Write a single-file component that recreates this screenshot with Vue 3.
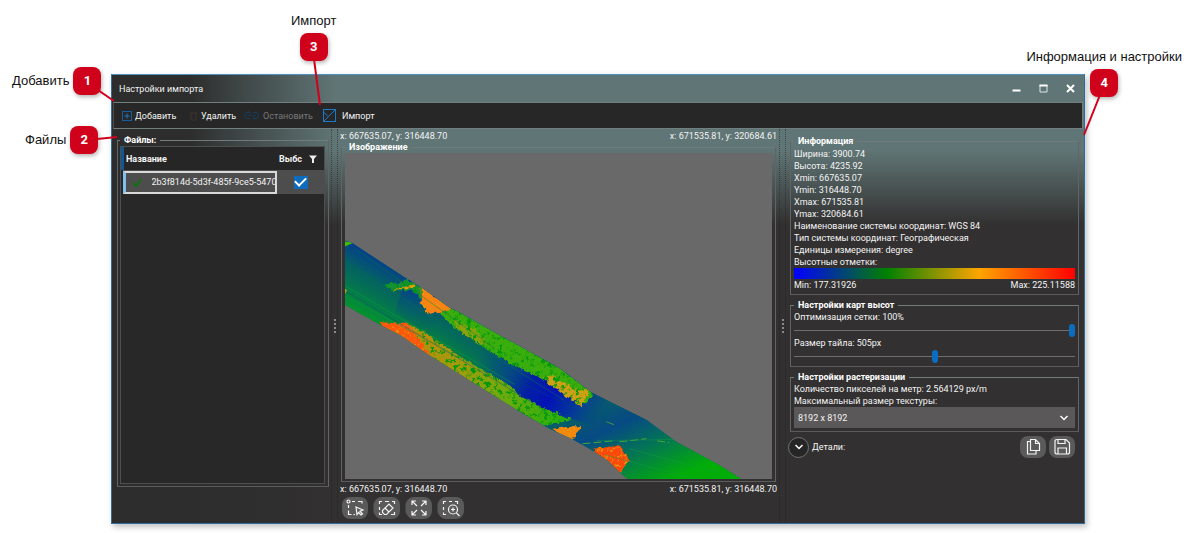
<script setup>
import { ref } from 'vue'

const info = [
  'Ширина: 3900.74',
  'Высота: 4235.92',
  'Xmin: 667635.07',
  'Ymin: 316448.70',
  'Xmax: 671535.81',
  'Ymax: 320684.61',
  'Наименование системы координат: WGS 84',
  'Тип системы координат: Географическая',
  'Единицы измерения: degree',
  'Высотные отметки:',
]
const mesh = ref(100)
const tile = ref(505)
const texture = ref('8192 x 8192')
const picked = ref(true)
</script>

<template>
  <main class="page">
    <section class="window" aria-label="Настройки импорта">
      <header class="titlebar">
        <h1>Настройки импорта</h1>
        <div class="controls">
          <button type="button" aria-label="Свернуть"><svg width="9" height="9" viewBox="0 0 9 9"><path d="M0.5 6.5h8" stroke="#fff" stroke-width="2" /></svg></button>
          <button type="button" aria-label="Развернуть"><svg width="9" height="9" viewBox="0 0 9 9"><path d="M1 1v7h7V1" fill="none" stroke="#dfe6e6" /><path d="M0.5 1.5h8" stroke="#fff" stroke-width="2" /></svg></button>
          <button type="button" aria-label="Закрыть"><svg width="9" height="9" viewBox="0 0 9 9"><path d="M1 1l7 7M8 1L1 8" stroke="#fff" stroke-width="2" /></svg></button>
        </div>
      </header>

      <nav class="toolbar">
        <button type="button" class="add">
          <svg width="10" height="10" viewBox="0 0 10 10" fill="none" stroke="#155d9c"><rect x="0.5" y="0.5" width="9" height="9" /><path d="M5 2.5v5M2.5 5h5" stroke="#2377bd" /></svg>
          Добавить
        </button>
        <button type="button" class="remove">
          <svg width="9" height="11" viewBox="0 0 9 11" fill="none" stroke="#40332d"><path d="M1 3h7M2 3v7h5V3" /></svg>
          Удалить
        </button>
        <button type="button" class="stop" disabled>
          <svg width="15" height="11" viewBox="0 0 15 11" fill="none" stroke="#173d5c"><path d="M6 2.5H3Q0.5 2.5 0.5 5.5T3 8.5H6M9 2.5H12Q14.5 2.5 14.5 5.5T12 8.5H10M3.5 5.5H6M4 0.5L11 10.5M9 5.500H11.5" /></svg>
          Остановить
        </button>
        <button type="button" class="import">
          <svg width="13" height="13" viewBox="0 0 13 13" fill="none" stroke="#1d79c4"><rect x="0.5" y="0.5" width="12" height="12" /><path d="M0.5 12.5L12.5 0.5M0.5 3L5 7.500" /></svg>
          Импорт
        </button>
      </nav>

      <div class="body">
        <div class="left">
          <fieldset class="group files">
            <legend>Файлы:</legend>
            <div class="grid">
              <table>
                <thead>
                  <tr>
                    <th scope="col">Название</th>
                    <th scope="col" class="pick">
                      <div>Выбс
                        <svg width="8" height="8" viewBox="0 0 8 8"><path d="M0 0.500h8L5 4v4H3V4z" fill="#eee" /></svg>
                      </div>
                    </th>
                  </tr>
                </thead>
                <tbody>
                  <tr>
                    <td class="name">
                      <div>
                        <svg width="10" height="9" viewBox="0 0 10 9"><path d="M1 5l3 3L9 1" fill="none" stroke="#0d720d" stroke-width="2" /></svg>
                        <span>2b3f814d-5d3f-485f-9ce5-5470</span>
                      </div>
                    </td>
                    <td class="pick"><input v-model="picked" type="checkbox" aria-label="Выбрать файл"></td>
                  </tr>
                </tbody>
              </table>
            </div>
          </fieldset>
        </div>

        <div class="splitter"><i></i></div>

        <div class="middle">
          <div class="coords top"><span>x: 667635.07, y: 316448.70</span><span>x: 671535.81, y: 320684.61</span></div>
          <fieldset class="group image">
            <legend>Изображение</legend>
            <svg class="map" viewBox="0 0 428 324" preserveAspectRatio="none" role="img" aria-label="Карта высот">
              <defs>
                <linearGradient id="across" gradientUnits="userSpaceOnUse" x1="40" y1="108" x2="8" y2="165">
                  <stop offset="0" stop-color="#043f8c" /><stop offset="0.35" stop-color="#04645f" /><stop offset="0.65" stop-color="#057b48" /><stop offset="1" stop-color="#03a41c" />
                </linearGradient>
                <linearGradient id="tail" gradientUnits="userSpaceOnUse" x1="265" y1="248" x2="305" y2="335">
                  <stop offset="0" stop-color="#06596e" /><stop offset="0.25" stop-color="#074a84" /><stop offset="0.55" stop-color="#04705a" /><stop offset="1" stop-color="#02ad08" />
                </linearGradient>
                <linearGradient id="river" gradientUnits="userSpaceOnUse" x1="60" y1="140" x2="262" y2="258">
                  <stop offset="0" stop-color="#047150" stop-opacity="0" /><stop offset="0.2" stop-color="#04803f" /><stop offset="0.4" stop-color="#057a48" /><stop offset="0.55" stop-color="#05507c" /><stop offset="0.66" stop-color="#0420a4" /><stop offset="0.76" stop-color="#0312b6" /><stop offset="0.88" stop-color="#053b98" /><stop offset="1" stop-color="#074a84" stop-opacity="0" />
                </linearGradient>
                <linearGradient id="edge" gradientUnits="userSpaceOnUse" x1="150" y1="172" x2="128" y2="210">
                  <stop offset="0" stop-color="#053a96" stop-opacity="0.8" /><stop offset="1" stop-color="#053a96" stop-opacity="0" />
                </linearGradient>
                <linearGradient id="bank" gradientUnits="userSpaceOnUse" x1="60" y1="170" x2="210" y2="265">
                  <stop offset="0" stop-color="#c08a10" /><stop offset="0.4" stop-color="#a39b08" /><stop offset="0.7" stop-color="#6eab08" /><stop offset="1" stop-color="#2fb009" />
                </linearGradient>
                <filter id="rough" x="-10%" y="-10%" width="120%" height="120%">
                  <feTurbulence type="fractalNoise" baseFrequency="0.25" numOctaves="2" seed="4" />
                  <feDisplacementMap in="SourceGraphic" scale="6" xChannelSelector="R" yChannelSelector="G" />
                </filter>
                <filter id="speckle" x="0" y="0" width="100%" height="100%" color-interpolation-filters="sRGB">
                  <feTurbulence type="fractalNoise" baseFrequency="0.22" numOctaves="3" seed="9" />
                  <feColorMatrix values="0 0 0 0 0.02  0 0 0 0 0.6  0 0 0 0 0.06  6 0 0 0 -3.2" />
                  <feComposite in2="SourceGraphic" operator="in" result="spots" />
                  <feMerge><feMergeNode in="SourceGraphic" /><feMergeNode in="spots" /></feMerge>
                </filter>
                <filter id="ember" x="0" y="0" width="100%" height="100%" color-interpolation-filters="sRGB">
                  <feTurbulence type="fractalNoise" baseFrequency="0.3" numOctaves="2" seed="2" />
                  <feColorMatrix values="0 0 0 0 0.88  0 0 0 0 0.62  0 0 0 0 0.03  5 0 0 0 -2.7" />
                  <feComposite in2="SourceGraphic" operator="in" result="spots" />
                  <feMerge><feMergeNode in="SourceGraphic" /><feMergeNode in="spots" /></feMerge>
                </filter>
                <clipPath id="strip"><path d="M0 87L8 90 62 125 77 134 105 154 112 157 142 174 215 214 247 238 302 265 332 287 375 310 397 324H283L275 317 264 306 250 297 238 290 225 283 205 274 175 257 143 237 83 200 57 182 32 169 0 151z" /></clipPath>
              </defs>
              <g clip-path="url(#strip)">
                <rect width="428" height="324" fill="#046a55" />
                <path d="M0 80L150 180 210 260 60 190 0 151z" fill="url(#across)" />
                <path d="M180 200L400 315V330H260L170 270z" fill="url(#tail)" />
                <path d="M50 120L120 160 220 210 275 245 265 275 160 245 60 180 30 150z" fill="url(#river)" />
                <path d="M62 120L180 190 170 236 50 158z" fill="url(#edge)" />
                <path d="M0 88l9 1-9 4z" fill="#3fbd05" />
                <path d="M0 135l2 2-2 3z" fill="#e0b000" />
                <g filter="url(#rough)">
                  <g filter="url(#speckle)">
                    <path d="M40 131L52 128 52 131 62 126 77 132 95 158 85 154 68 137 46 136z" fill="#159030" />
                    <path d="M94 158L112 154 142 170 215 210 251 236 240 250 206 229 184 218 168 211 141 194 110 174z" fill="#3aae0c" />
                    <path d="M108 165l22 10 16 16-12-2-20-12z" fill="#8aa30b" />
                    <path d="M198 222l12 0 20 13 16 1-9 16-15-10-20-14z" fill="#cf9f12" />
                    <path d="M61 168L82 180 118 204 162 229 178 243 200 254 226 264 217 268 198 271 175 262 143 242 79 202z" fill="url(#bank)" />
                  </g>
                  <g filter="url(#ember)">
                    <path d="M50 135l18-4 2 3-22 2z" fill="#e69a08" />
                    <path d="M76 133l31 22-23 5-8-10z" fill="#f98212" />
                    <path d="M32 168l31 2 12 16 12 18-31-18z" fill="#fc560c" />
                    <path d="M208 274l29-3-11 16z" fill="#f48809" />
                    <path d="M247 294l28-3 10 13-9 15z" fill="#fb4907" />
                  </g>
                </g>
                <path d="M197 273l40-5" stroke="#065f68" stroke-width="2" />
                <path d="M238 289l32-3M275 287l27-3M313 286l12 2M262 267l10 4" fill="none" stroke="#4aa536" stroke-dasharray="8 3" />
                <g fill="none" stroke-width="1" opacity="0.4">
                  <path d="M0 108L220 246M10 95L150 194" stroke="#067a44" />
                  <path d="M0 132L170 230M0 142L150 222" stroke="#04a93e" />
                  <path d="M0 137L200 255M160 220l75 36" stroke="#064a78" />
                  <path d="M260 300l90 24M285 294l90 24M252 286l120-2" stroke="#13a245" />
                </g>
              </g>
            </svg>
          </fieldset>
          <div class="coords"><span>x: 667635.07, y: 316448.70</span><span>x: 671535.81, y: 316448.70</span></div>
          <div class="tools">
            <button type="button" class="tool" aria-label="Выделить область">
              <svg width="20" height="20" viewBox="0 0 20 20"><circle cx="3.5" cy="3.5" r="1.5" /><path d="M7 3.5h3M13 3.5h4v2M3.5 7v3M3.5 12.5v4h3M8.5 16.5h1.5" /><path d="M11 9l7 3-3 1.2 2.5 2.8-1.500 1-2.300-2.500L12 16.500z" /></svg>
            </button>
            <button type="button" class="tool" aria-label="Стереть выделение">
              <svg width="20" height="20" viewBox="0 0 20 20"><path d="M2.5 6V3.500H5M8 3.500h4M15 3.500h2.500V6M2.500 9v3M2.500 14.500v2H5M17.500 14v2.500H14" /><path d="M5.500 12.500L12 6l4 4-6.500 6.500h-2l-2-2zM8 10l4 4" /></svg>
            </button>
            <button type="button" class="tool" aria-label="На весь экран">
              <svg width="20" height="20" viewBox="0 0 20 20"><path d="M3 7V3h4M3 3l5 5M13 3h4v4M17 3l-5 5M3 13v4h4M3 17l5-5M17 13v4h-4M17 17l-5-5" /></svg>
            </button>
            <button type="button" class="tool" aria-label="Приблизить область">
              <svg width="20" height="20" viewBox="0 0 20 20"><path d="M2.500 6V3.500H5M8 3.500h3M14 3.500h2.500V6M2.500 9v3M2.500 14.500v2H5" /><circle cx="12" cy="11.500" r="4.500" /><path d="M12 9.500v4M10 11.500h4M15.500 15l3 3" /></svg>
            </button>
          </div>
        </div>

        <div class="splitter"><i></i></div>

        <div class="right">
          <fieldset class="group">
            <legend>Информация</legend>
            <p v-for="line in info" :key="line">{{ line }}</p>
            <div class="scale"></div>
            <div class="range"><span>Min: 177.31926</span><span>Max: 225.11588</span></div>
          </fieldset>

          <fieldset class="group sliders">
            <legend>Настройки карт высот</legend>
            <label for="mesh">Оптимизация сетки: {{ mesh }}%</label>
            <input id="mesh" v-model="mesh" type="range" min="0" max="100">
            <label for="tile">Размер тайла: {{ tile }}px</label>
            <input id="tile" v-model="tile" type="range" min="0" max="1010">
          </fieldset>

          <fieldset class="group raster">
            <legend>Настройки растеризации</legend>
            <p>Количество пикселей на метр: 2.564129 px/m</p>
            <label for="texture">Максимальный размер текстуры:</label>
            <div class="select">
              <select id="texture" v-model="texture"><option>8192 x 8192</option></select>
              <svg width="8" height="6" viewBox="0 0 8 6"><path d="M0.500 1L4 4.500 7.500 1" fill="none" stroke="#fff" stroke-width="1.500" /></svg>
            </div>
          </fieldset>

          <div class="details">
            <button type="button" class="expand" aria-label="Показать детали">
              <svg width="8" height="6" viewBox="0 0 8 6"><path d="M0.500 1L4 4.500 7.500 1" fill="none" stroke="#fff" stroke-width="1.500" /></svg>
            </button>
            <span>Детали:</span>
            <button type="button" class="tool" aria-label="Копировать">
              <svg width="20" height="20" viewBox="0 0 20 20"><path d="M7.500 2.500h5l4 4v7h-9zM12.500 2.500v4h4M7.500 4.500h-3v12.500h8.500v-3" /></svg>
            </button>
            <button type="button" class="tool" aria-label="Сохранить">
              <svg width="20" height="20" viewBox="0 0 20 20"><path d="M5 2.500h9l3.500 3.500v9q0 2-2 2H5q-2 0-2-2v-10.500q0-2 2-2zM6 2.500v4h7v-4M6 17v-6h8.500v6" /></svg>
            </button>
          </div>
        </div>
      </div>
    </section>

    <div class="note note-add"><span>Добавить</span><b>1</b><svg width="18" height="16"><path d="M0 2l16 11" /></svg></div>
    <div class="note note-files"><span>Файлы</span><b>2</b><svg width="22" height="8"><path d="M0 5l20-2" /></svg></div>
    <div class="note note-import"><span>Импорт</span><b>3</b><svg width="12" height="48"><path d="M2 0l6 46" /></svg></div>
    <div class="note note-info"><span>Информация и настройки</span><b>4</b><svg width="20" height="42"><path d="M17 0L1 40" /></svg></div>
  </main>
</template>

<style>
body { background: #fff; }
</style>

<style scoped>
* { box-sizing: border-box; }
.page {
  position: relative;
  display: flex;
  min-height: 100vh;
  padding: 74px 112px 9px 111px;
  font: 9px/12px Roboto, "Noto Sans", sans-serif;
  color: #f4f4f4;
}
.window {
  flex: 1;
  min-width: 0;
  display: flex;
  flex-direction: column;
  border: 1px solid #2e6d9c;
  border-top-color: #4b93c2;
  background:
    linear-gradient(to right, #2d2d2d 8%, rgba(45, 45, 45, 0) 23%),
    linear-gradient(to bottom, #607575 75px, #323030 150px);
  box-shadow: 2px 3px 6px rgba(0, 0, 0, 0.25);
}
button { font: inherit; color: inherit; border: 0; padding: 0; background: none; }
p, h1 { margin: 0; font: inherit; }
svg { display: block; flex: none; }

.titlebar { display: flex; align-items: center; justify-content: space-between; height: 27px; padding: 0 9px 0 7px; }
.controls { display: flex; gap: 18px; }
.toolbar {
  display: grid;
  grid-template-columns: 67px 55px 79px auto;
  align-items: center;
  height: 27px;
  margin: 0 1px;
  padding: 0 8px;
  background: #272727;
  border: 1px solid #71807f;
  border-left-color: #4a4c4c;
}
.toolbar button { display: flex; align-items: center; gap: 3px; }
.toolbar .stop { gap: 4px; color: #777; }
.toolbar .import { gap: 6px; }

.body { flex: 1; display: grid; grid-template-columns: 219px 7px 1fr 7px 298px; }
.group { min-width: 0; margin: 0; padding: 1px 3px 3px; border: 1px solid; border-color: #717b7b #626464 #5c5c5c; }
legend { height: 12px; padding: 0 4px; font-weight: 700; color: #fff; }
.left { display: flex; padding: 5px 2px 36px 5px; }
.files { flex: 1; display: flex; padding: 0 3px 2px 2px; }
.grid { flex: 1; height: 100%; border: 1px solid #4d4f4f; background: #282828; }
table { width: 100%; border-collapse: collapse; table-layout: fixed; }
th { height: 23px; padding: 0 0 0 2px; text-align: left; border-left: 3px solid #0f5796; background: #262626; }
th.pick { width: 47px; border: 0; }
th.pick div { display: flex; align-items: center; gap: 7px; white-space: nowrap; }
td { height: 24px; padding: 0; background: #4d4d4d; }
td.pick { text-align: center; vertical-align: middle; }
.name div {
  display: flex;
  align-items: center;
  gap: 10px;
  height: 23px;
  padding: 0 0 0 6px;
  border: 2px solid #d9d9d9;
  border-left: 3px solid #7fc0ee;
  overflow: hidden;
}
.name span { flex: 1; min-width: 0; overflow: hidden; white-space: nowrap; }
input[type="checkbox"] { appearance: none; display: inline-grid; place-items: center; width: 14px; height: 13px; margin: 0; background: #0f6cbd; vertical-align: middle; }
input[type="checkbox"]:checked::after { content: ""; width: 9px; height: 5px; margin-top: -3px; border: solid #fff; border-width: 0 0 2px 2px; rotate: -45deg; }

.splitter { display: grid; place-items: center; border: dotted rgba(25, 25, 25, 0.5); border-width: 0 1px; }
.splitter i { width: 2px; height: 14px; background: repeating-linear-gradient(#8a8a8a 0 2px, transparent 2px 4px); }

.middle { display: flex; flex-direction: column; padding: 0 2px 4px; }
.coords { display: flex; justify-content: space-between; height: 12px; }
.coords.top { line-height: 14px; }
.image { flex: 1; display: flex; margin: 0 1px 1px; padding: 0 3px 2px; }
.map { width: 100%; height: 100%; min-height: 0; background: #696969; }
.tools { display: flex; gap: 6px; margin: 2px 2px 0; }
.tool { display: grid; place-items: center; width: 26px; height: 22px; border-radius: 8px; background: #5b5a5b; }
.tool svg { fill: none; stroke: #f4f4f4; stroke-width: 1.2; }
.tools .tool + .tool { box-shadow: -4px 0 0 -3px #444; }

.right { padding: 6px 5px 0 4px; display: flex; flex-direction: column; gap: 4px; }
.scale { height: 11px; background: linear-gradient(to right, #00f, #008000 33%, #ffa500 66%, #f00); }
.range { display: flex; justify-content: space-between; }
label { display: block; }
.sliders { padding-top: 0; }
input[type="range"] { appearance: none; display: block; width: 100%; height: 14px; margin: 0; background: linear-gradient(#6d6d6d, #6d6d6d) center / 100% 1px no-repeat; }
input[type="range"]::-webkit-slider-thumb { appearance: none; width: 6px; height: 13px; border-radius: 3px; background: #0b6dc0; }
.raster { padding-top: 0; }
.select { display: flex; align-items: center; height: 21px; padding: 0 7px 0 0; background: #5a5859; }
select { flex: 1; height: 100%; padding: 0 4px; appearance: none; border: 0; background: none; font: inherit; color: inherit; }
.details { display: flex; align-items: center; gap: 3px; margin: 0 4px 0 -2px; }
.details span { flex: 1; }
.expand { display: grid; place-items: center; width: 21px; height: 21px; border: 1px solid #737373; border-radius: 50%; background: #262626; }

.note {
  position: absolute;
  display: flex;
  align-items: center;
  gap: 4px;
  font: 13px/16px "Liberation Sans", Arial, sans-serif;
  color: #111;
  white-space: nowrap;
}
.note b {
  display: grid;
  place-items: center;
  width: 28px;
  height: 28px;
  border-radius: 8px;
  background: #d0021b;
  color: #fff;
  font: 700 13px/16px Roboto, sans-serif;
  box-shadow: 1px 2px 4px rgba(0, 0, 0, 0.3);
}
.note svg { position: absolute; fill: none; stroke: #d0021b; stroke-width: 2; }
.note-add { left: 12px; top: 67px; }
.note-add svg { left: 86px; top: 21px; }
.note-files { left: 25px; top: 126px; }
.note-files svg { left: 72px; top: 8px; }
.note-import { left: 291px; top: 13px; flex-direction: column; }
.note-import svg { left: 21px; top: 46px; }
.note-info { right: 15px; top: 49px; flex-direction: column; }
.note-info svg { right: 79px; top: 46px; }
</style>
